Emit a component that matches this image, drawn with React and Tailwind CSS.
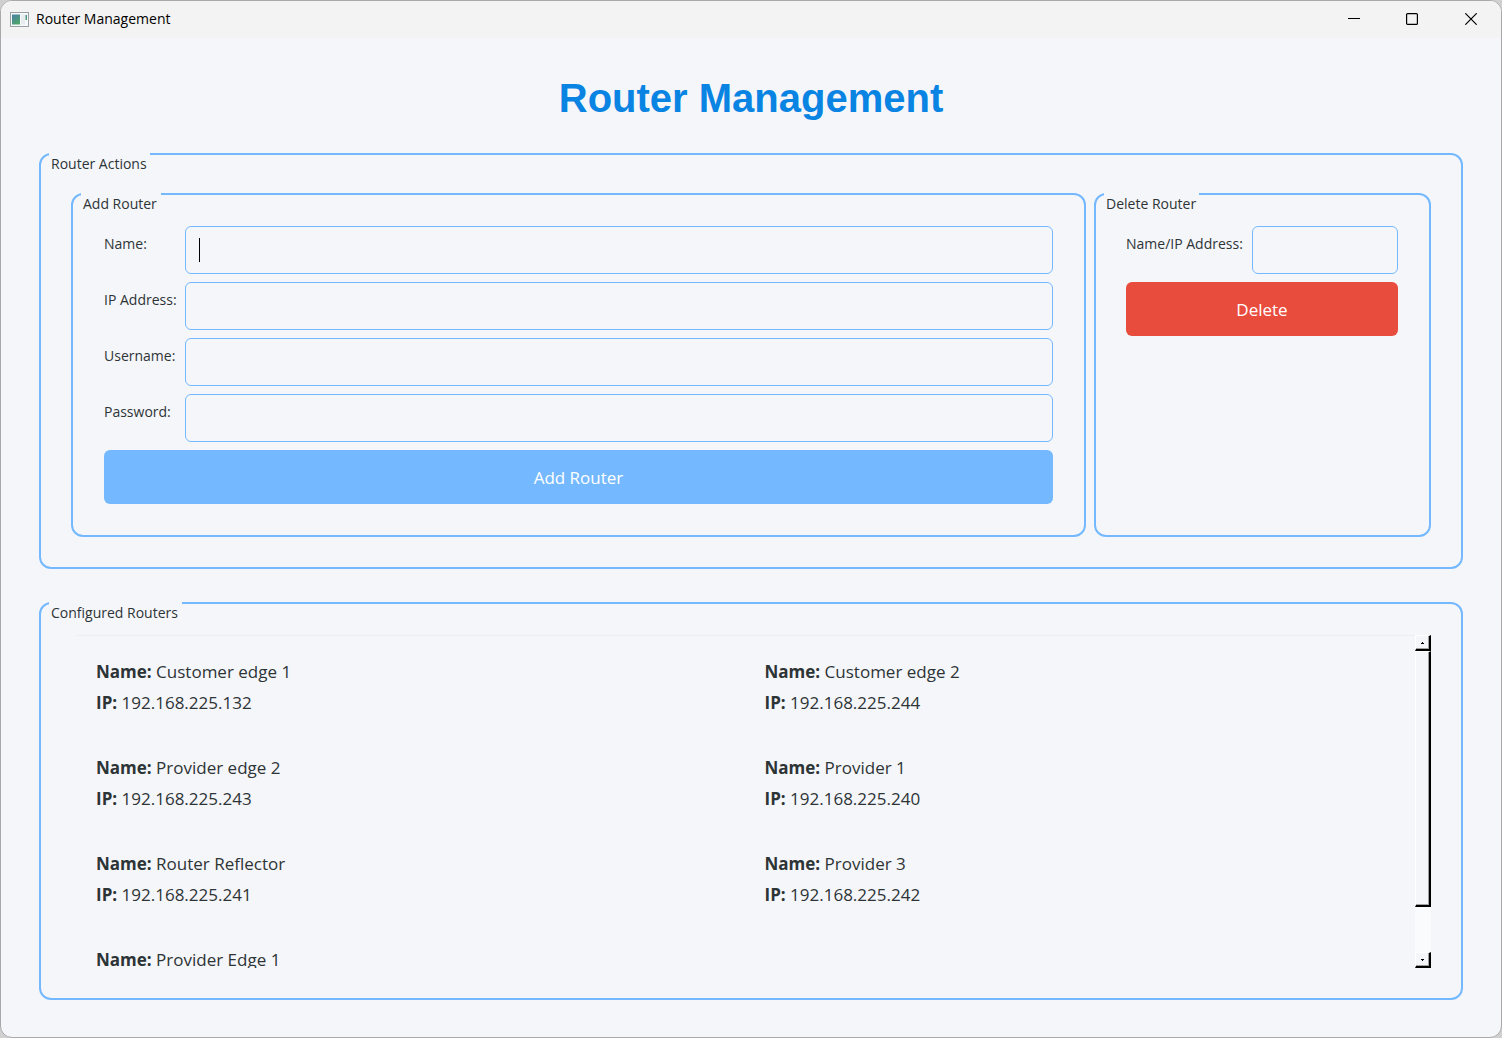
import React from "react";

const routers = [
  { name: "Customer edge 1", ip: "192.168.225.132" },
  { name: "Customer edge 2", ip: "192.168.225.244" },
  { name: "Provider edge 2", ip: "192.168.225.243" },
  { name: "Provider 1", ip: "192.168.225.240" },
  { name: "Router Reflector", ip: "192.168.225.241" },
  { name: "Provider 3", ip: "192.168.225.242" },
  { name: "Provider Edge 1" },
];

const fields = [
  { id: "router-name", label: "Name:", type: "text", caret: true },
  { id: "router-ip", label: "IP Address:", type: "text" },
  { id: "router-user", label: "Username:", type: "text" },
  { id: "router-pass", label: "Password:", type: "password" },
];

const inputClass =
  "h-12 w-full min-w-0 rounded-md border border-[#74b9ff] bg-transparent px-3 text-base outline-none";
const labelClass = "pt-2 text-sm leading-5 whitespace-nowrap";
const bevelClass =
  "border-t border-r-2 border-b-2 border-l border-t-white border-r-black border-b-black border-l-white bg-[#f5f6fa] shadow-[inset_-1px_-1px_0_#a0a0a0]";

function AppIcon() {
  return (
    <svg width="19" height="15" viewBox="0 0 19 15" aria-hidden="true">
      <defs>
        <linearGradient id="app-icon-fill" x1="0" y1="0" x2="0.6" y2="1">
          <stop offset="0" stopColor="#4a7fa8" />
          <stop offset="1" stopColor="#4fa36b" />
        </linearGradient>
      </defs>
      <rect x="0.5" y="0.5" width="18" height="14" fill="#f7f8f9" stroke="#9ba0a5" />
      <rect x="2" y="2.5" width="8" height="10" fill="url(#app-icon-fill)" />
      <rect x="11" y="2.5" width="4" height="10" fill="#e9ecee" />
      <rect x="15.5" y="3" width="1.5" height="5" fill="url(#app-icon-fill)" />
    </svg>
  );
}

function TitleBar() {
  return (
    <header className="flex h-[37px] shrink-0 items-start bg-[#f3f3f3] pl-[9px] text-black">
      <div className="flex h-9 flex-1 items-center gap-[7px]">
        <AppIcon />
        <span className="text-sm">Router Management</span>
      </div>
      <button type="button" aria-label="Minimize" className="flex h-9 w-[58px] items-center justify-center">
        <svg width="12" height="12" viewBox="0 0 12 12"><path d="M0 5.5H12" stroke="#000" /></svg>
      </button>
      <button type="button" aria-label="Maximize" className="flex h-9 w-[58px] items-center justify-center">
        <svg width="12" height="12" viewBox="0 0 12 12">
          <rect x="0.6" y="0.6" width="10.8" height="10.8" rx="1" fill="none" stroke="#000" strokeWidth="1.2" />
        </svg>
      </button>
      <button type="button" aria-label="Close" className="flex h-9 w-[60px] items-center justify-center">
        <svg width="12" height="12" viewBox="0 0 12 12">
          <path d="M0.3 0.3L11.7 11.7M11.7 0.3L0.3 11.7" stroke="#000" strokeWidth="1.2" />
        </svg>
      </button>
    </header>
  );
}

function Group({ title, className, legendClass, children }) {
  return (
    <fieldset className={`relative min-w-0 rounded-xl border-2 border-[#74b9ff] ${className}`}>
      <legend className={`absolute -top-0.5 left-2 bg-[#f5f6fa] pl-0.5 text-sm leading-[22px] whitespace-nowrap ${legendClass}`}>
        {title}
      </legend>
      {children}
    </fieldset>
  );
}

function ScrollButton({ label, down }) {
  return (
    <button
      type="button"
      aria-label={label}
      className={`flex h-4 w-full shrink-0 items-center justify-center ${bevelClass}`}
    >
      <svg width="3" height="2" viewBox="0 0 3 2">
        <path d={down ? "M0 0H3V1H2V2H1V1H0Z" : "M1 0H2V1H3V2H0V1H1Z"} fill="#000" />
      </svg>
    </button>
  );
}

function ScrollBar() {
  return (
    <div className="flex w-4 shrink-0 flex-col bg-[#fafbfd]">
      <ScrollButton label="Scroll up" />
      <div className="min-h-0 flex-1">
        <div className={`h-[85%] ${bevelClass}`} />
      </div>
      <ScrollButton label="Scroll down" down />
    </div>
  );
}

export default function App() {
  return (
    <div className="h-screen bg-[#d0d0d0] font-['Open_Sans','Noto_Sans',sans-serif] text-[#2d3436]">
      <div className="flex h-full flex-col overflow-hidden rounded-xl border border-[#a9a9a9] bg-[#f5f6fa]">
        <TitleBar />
        <main className="flex min-h-0 flex-1 flex-col px-[38px] pb-[37px]">
          <h1 className="pt-9 text-center font-['Liberation_Sans',Arial,sans-serif] text-[40px] leading-[48px] font-bold text-[#0984e3]">
            Router Management
          </h1>

          <Group title="Router Actions" className="mt-[31px] px-[30px] pt-[38px] pb-[30px]" legendClass="w-[101px]">
            <div className="flex gap-2">
              <Group title="Add Router" className="flex-1 px-[31px] pt-[31px] pb-[31px]" legendClass="w-[80px]">
                <form className="grid grid-cols-[73px_1fr] gap-2" onSubmit={(e) => e.preventDefault()}>
                  {fields.map((f) => (
                    <React.Fragment key={f.id}>
                      <label htmlFor={f.id} className={labelClass}>{f.label}</label>
                      <div className="relative">
                        <input id={f.id} type={f.type} className={inputClass} />
                        {f.caret && <span className="pointer-events-none absolute top-3 left-3.5 h-6 w-px bg-black" />}
                      </div>
                    </React.Fragment>
                  ))}
                  <button type="submit" className="col-span-2 h-[54px] rounded-md bg-[#74b9ff] pt-0.5 text-[17px] text-white">
                    Add Router
                  </button>
                </form>
              </Group>
              <Group title="Delete Router" className="w-[337px] pt-[31px] pr-[31px] pl-[30px]" legendClass="w-[95px]">
                <form className="grid grid-cols-[118px_1fr] gap-2" onSubmit={(e) => e.preventDefault()}>
                  <label htmlFor="delete-target" className={labelClass}>Name/IP Address:</label>
                  <input id="delete-target" type="text" className={inputClass} />
                  <button type="submit" className="col-span-2 h-[54px] rounded-md bg-[#e84c3d] pt-0.5 text-[17px] text-white">
                    Delete
                  </button>
                </form>
              </Group>
            </div>
          </Group>

          <Group title="Configured Routers" className="mt-[33px] flex min-h-0 flex-1 flex-col px-[30px] pt-[31px] pb-[30px]" legendClass="w-[133px]">
            <div className="flex min-h-0 flex-1">
              <div className="ml-1.5 min-h-0 flex-1 overflow-hidden border-t border-[#eceef2] pt-5 pl-[19px]">
                <ul className="grid grid-cols-2 gap-x-[18px] gap-y-[34px] text-[17px] leading-[31px]">
                  {routers.map((r) => (
                    <li key={r.name}>
                      <p><b>Name:</b> {r.name}</p>
                      {r.ip && <p><b>IP:</b> {r.ip}</p>}
                    </li>
                  ))}
                </ul>
              </div>
              <ScrollBar />
            </div>
          </Group>
        </main>
      </div>
    </div>
  );
}
